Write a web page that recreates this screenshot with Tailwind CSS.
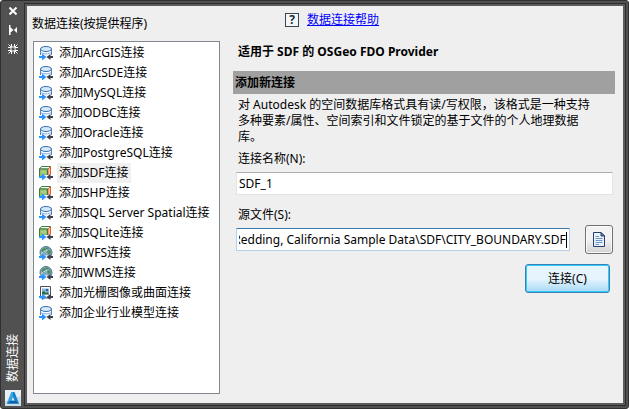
<!DOCTYPE html>
<html lang="zh-CN">
<head>
    <meta charset="UTF-8">
    <meta name="viewport" content="width=device-width, initial-scale=1.0">
    <title>数据连接</title>
    <script src="https://cdn.jsdelivr.net/npm/@tailwindcss/browser@4"></script>
</head>
<body class="bg-white font-['Noto_Sans','Noto_Sans_CJK_SC',sans-serif] text-xs text-black">

<!-- Icon set -->
<svg class="hidden">
    <defs>
        <linearGradient id="drum" x1="0" x2="1" y1="0" y2="0">
            <stop offset="0" stop-color="#8fb9e0"/>
            <stop offset=".5" stop-color="#ffffff"/>
            <stop offset="1" stop-color="#a9cbea"/>
        </linearGradient>
    </defs>
    <symbol id="arrows" viewBox="0 0 14 14">
        <path d="M0 10h3V7.500L7.500 11 3 14.500V12H0z" fill="#2b95ff"/>
        <path d="M14 10h-2.500V8L7.500 11l4 3V12H14z" fill="#3b3e4c"/>
    </symbol>
    <symbol id="database" viewBox="0 0 14 14">
        <path d="M1.500 3v7h11V3z" fill="url(#drum)"/>
        <path d="M1.500 3v6M12.500 3v6" stroke="#4a80c0"/>
        <ellipse cx="7" cy="3" rx="5.500" ry="2.500" fill="#d3e8f8" stroke="#3a6fb0"/>
        <path d="M1.500 6c2 2.500 9 2.500 11 0" fill="none" stroke="#7fb0de"/>
        <path d="M3.500 9h7v3h-7z" fill="#fff"/>
        <use href="#arrows"/>
    </symbol>
    <symbol id="layer" viewBox="0 0 14 14">
        <path d="M.5 3 2.500 .5h9L9 3z" fill="#fff" stroke="#2f8a3a"/>
        <path d="M9 3 11.500 .5V8L9 10z" fill="#ffd0a8" stroke="#e8552a"/>
        <path d="M.5 3H8.500V10.500H.5z" fill="#8fbf6c" stroke="#4b7346"/>
        <path d="M2 4.500h5v3H2z" fill="#a8cf82"/>
        <path d="M3.500 9h7v3h-7z" fill="#fff"/>
        <use href="#arrows"/>
    </symbol>
    <symbol id="globe" viewBox="0 0 14 14">
        <circle cx="7" cy="6.500" r="6" fill="#86adc2" stroke="#53758f"/>
        <path d="M2.500 4 5 2l2.500 1L6 6 3.500 7.500zM8 5l3-1.500L12 7l-3 1.500zM6 1.500h3l1 1.500H7.500z" fill="#4f8d63"/>
        <path d="M2 8.500c1-2 3-3.500 6-4" fill="none" stroke="#cfe5ea"/>
        <path d="M3.500 9.500h7V13h-7z" fill="#fff"/>
        <use href="#arrows"/>
    </symbol>
    <symbol id="raster" viewBox="0 0 14 14">
        <path d="M1.500 .5h10V12h-10z" fill="#fff" stroke="#4a4f5a"/>
        <path d="M3 2.500h7v6H3z" fill="#86b6df"/>
        <path d="M3 8.500V6l2-1 2 2 1.500-1L10 8.500z" fill="#356b3f"/>
        <path d="M7 3h2v2H7z" fill="#2f5a96"/>
        <use href="#arrows"/>
    </symbol>
</svg>

<!-- Palette frame -->
<div class="flex min-h-screen rounded-[3px] border border-[#303030] bg-[#515151]">

    <!-- Palette title bar -->
    <div class="flex w-[23px] shrink-0 flex-col items-center pt-1 pb-[2px]">
        <button type="button" aria-label="关闭" class="flex h-3 w-full items-center justify-center">
            <svg class="size-2" viewBox="0 0 8 8"><path d="M.5 .5l7 7M7.500 .5l-7 7" stroke="#fff" stroke-width="2"/></svg>
        </button>
        <button type="button" aria-label="自动隐藏" class="mt-[7px] flex h-3 w-full items-center justify-center">
            <svg class="h-[10px] w-2" viewBox="0 0 8 10"><path d="M0 0h1.500v10H0zM1.500 2.500 4.500 5l-3 2.500zM8 2v6L5 5z" fill="#fff"/></svg>
        </button>
        <button type="button" aria-label="特性" class="mt-[7px] flex h-3 w-full items-center justify-center">
            <svg class="size-[10px]" viewBox="0 0 10 10" stroke="#fff">
                <path d="M3.500 0v3M6.500 0v3M3.500 7v3M6.500 7v3M0 3.500h3M0 6.500h3M7 3.500h3M7 6.500h3M.5 .5l2.500 2.500M7 7l2.500 2.500M9.500 .5 7 3M3 7 .5 9.500"/>
                <rect x="3" y="3" width="4" height="4" fill="none"/>
            </svg>
        </button>
        <h1 class="mt-auto mb-2 rotate-180 leading-4 text-white [text-orientation:sideways] [writing-mode:vertical-rl]">数据连接</h1>
        <svg class="size-4" viewBox="0 0 16 16">
            <rect width="16" height="16" fill="#c9dde9"/>
            <path d="M0 0h16v6L0 11z" fill="#e6eff5"/>
            <path d="M6.500 2h3L14 13.500H2z" fill="#1583cc"/>
            <path d="M6.500 2H8v6l-2.500 3L2 13.500z" fill="#3aa5e4"/>
            <path d="M8 7 9.500 10.500h-3z" fill="#d9ecf7"/>
            <path d="M5.500 11h5l3.500 2.500H2z" fill="#0a62a8"/>
        </svg>
    </div>

    <!-- Palette content -->
    <div class="my-[2px] mr-[2px] flex min-w-0 flex-1 border border-[#2b2b2b] bg-[#5c5c5c] p-[2px]">
        <div class="flex min-w-0 flex-1 gap-[13px] bg-[#efefef] pr-2 pl-[5px]">

            <!-- Providers -->
            <section class="flex w-[188px] shrink-0 flex-col pt-[10px] pb-[9px]">
                <h2 class="leading-4">数据连接(按提供程序)</h2>
                <ul class="mt-[9px] ml-px flex-1 border border-[#828790] bg-white pt-[1px] pl-[5px]">
                    <li><button type="button" class="flex h-5 items-center gap-1"><svg class="size-[14px]"><use href="#database"/></svg><span class="px-[2px] leading-5">添加ArcGIS连接</span></button></li>
                    <li><button type="button" class="flex h-5 items-center gap-1"><svg class="size-[14px]"><use href="#database"/></svg><span class="px-[2px] leading-5">添加ArcSDE连接</span></button></li>
                    <li><button type="button" class="flex h-5 items-center gap-1"><svg class="size-[14px]"><use href="#database"/></svg><span class="px-[2px] leading-5">添加MySQL连接</span></button></li>
                    <li><button type="button" class="flex h-5 items-center gap-1"><svg class="size-[14px]"><use href="#database"/></svg><span class="px-[2px] leading-5">添加ODBC连接</span></button></li>
                    <li><button type="button" class="flex h-5 items-center gap-1"><svg class="size-[14px]"><use href="#database"/></svg><span class="px-[2px] leading-5">添加Oracle连接</span></button></li>
                    <li><button type="button" class="flex h-5 items-center gap-1"><svg class="size-[14px]"><use href="#database"/></svg><span class="px-[2px] leading-5">添加PostgreSQL连接</span></button></li>
                    <li><button type="button" aria-current="true" class="flex h-5 items-center gap-1"><svg class="size-[14px]"><use href="#layer"/></svg><span class="bg-[#f0f0f0] px-[2px] leading-5">添加SDF连接</span></button></li>
                    <li><button type="button" class="flex h-5 items-center gap-1"><svg class="size-[14px]"><use href="#layer"/></svg><span class="px-[2px] leading-5">添加SHP连接</span></button></li>
                    <li><button type="button" class="flex h-5 items-center gap-1"><svg class="size-[14px]"><use href="#database"/></svg><span class="px-[2px] leading-5 whitespace-nowrap">添加SQL Server Spatial连接</span></button></li>
                    <li><button type="button" class="flex h-5 items-center gap-1"><svg class="size-[14px]"><use href="#layer"/></svg><span class="px-[2px] leading-5">添加SQLite连接</span></button></li>
                    <li><button type="button" class="flex h-5 items-center gap-1"><svg class="size-[14px]"><use href="#globe"/></svg><span class="px-[2px] leading-5">添加WFS连接</span></button></li>
                    <li><button type="button" class="flex h-5 items-center gap-1"><svg class="size-[14px]"><use href="#globe"/></svg><span class="px-[2px] leading-5">添加WMS连接</span></button></li>
                    <li><button type="button" class="flex h-5 items-center gap-1"><svg class="size-[14px]"><use href="#raster"/></svg><span class="px-[2px] leading-5">添加光栅图像或曲面连接</span></button></li>
                    <li><button type="button" class="flex h-5 items-center gap-1"><svg class="size-[14px]"><use href="#database"/></svg><span class="px-[2px] leading-5">添加企业行业模型连接</span></button></li>
                </ul>
            </section>

            <!-- Connection form -->
            <main class="flex min-w-0 flex-1 flex-col pt-[6px]">
                <div class="flex items-center gap-2 pl-[52px]">
                    <span class="flex size-[14px] items-center justify-center border border-[#3c4656] bg-[#f4f6f8] text-xs leading-3 font-bold text-[#222b38]">?</span>
                    <a href="#" class="leading-4 text-[#0000ff] underline">数据连接帮助</a>
                </div>
                <h2 class="mt-4 pl-[5px] leading-4 font-bold">适用于 SDF 的 OSGeo FDO Provider</h2>
                <h3 class="mt-[11px] bg-[#a0a0a0] pl-[2px] leading-[23px] font-bold">添加新连接</h3>

                <form class="pr-[2px] pl-[3px]">
                    <p class="mt-[3px] pr-5 pl-[2px] leading-4">对 Autodesk 的空间数据库格式具有读/写权限，该格式是一种支持多种要素/属性、空间索引和文件锁定的基于文件的个人地理数据库。</p>
                    <label for="name" class="mt-[6px] block pl-[2px] leading-4">连接名称(N):</label>
                    <input id="name" type="text" value="SDF_1" class="mt-[5px] block h-[23px] w-full rounded-[1px] border border-[#e2e3ea] border-t-[#abadb3] bg-white px-[2px] outline-none">
                    <label for="source" class="mt-3 block pl-[2px] leading-4">源文件(S):</label>
                    <div class="mt-[2px] flex items-center gap-[15px]">
                        <div class="flex h-[23px] min-w-0 flex-1 items-center rounded-[1px] border border-[#b5cfe7] border-t-[#3d7bad] bg-white px-[2px]">
                            <input id="source" type="text" value="C:\Redding, California Sample Data\SDF\CITY_BOUNDARY.SDF" class="h-full min-w-0 flex-1 text-right outline-none">
                            <span class="h-4 w-px bg-black"></span>
                        </div>
                        <button type="button" aria-label="浏览文件" class="flex h-[29px] w-7 items-center justify-center rounded-[3px] border border-[#707070] bg-linear-to-b from-[#f2f2f2] from-50% to-[#d2d2d2] to-100% inset-ring inset-ring-white/80">
                            <svg class="h-[15px] w-3" viewBox="0 0 12 15">
                                <path d="M.5 .5h7.500l3.500 3.500v10.500H.5z" fill="#eaf1fa" stroke="#24426e"/>
                                <path d="M8 .5V4h3.500z" fill="#5d86bd" stroke="#24426e"/>
                                <path d="M2.500 4.500H6M2.500 6.500h7M2.500 8.500h7M2.500 10.500h7M2.500 12.500H6" stroke="#6d96c8"/>
                            </svg>
                        </button>
                    </div>
                    <div class="mt-[10px] flex justify-end pr-[3px]">
                        <button type="button" class="h-[29px] w-[85px] rounded-[3px] border border-[#3c7fb1] bg-linear-to-b from-[#e6f5fd] from-50% to-[#a7d9f5] to-100% inset-ring inset-ring-[#2fcdf8]">连接(C)</button>
                    </div>
                </form>
            </main>
        </div>
    </div>
</div>

<script>
    // Keep the end of the long path in view
    const source = document.getElementById("source");
    source.scrollLeft = source.scrollWidth;
</script>

</body>
</html>
